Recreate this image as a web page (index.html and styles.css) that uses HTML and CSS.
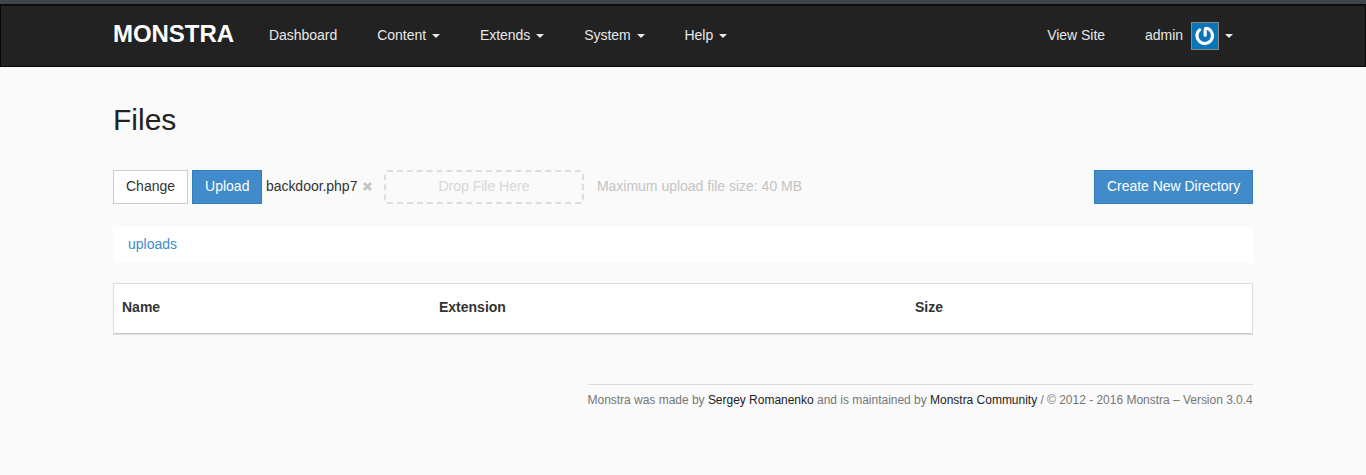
FILE: index.html
```html
<!DOCTYPE html>
<html lang="en">
<head>
<meta charset="utf-8">
<title>Monstra</title>
<link rel="stylesheet" href="styles.css">
</head>
<body>
<div class="chrome-edge"></div>
<header class="navbar">
  <div class="container nav-row">
    <a class="brand">MONSTRA</a>
    <nav class="nav">
      <a>Dashboard</a>
      <a>Content <i class="caret"></i></a>
      <a>Extends <i class="caret"></i></a>
      <a>System <i class="caret"></i></a>
      <a>Help <i class="caret"></i></a>
    </nav>
    <nav class="nav nav-right">
      <a>View Site</a>
      <a class="user"><span>admin</span>
        <svg class="avatar" width="28" height="28" viewBox="0 0 28 28"><rect x=".5" y=".5" width="27" height="27" fill="#0a74b8" stroke="#8a8a8a"/><path d="M8.6 7.9A7.8 7.8 0 1 0 18 7.2Q14.2 5.2 14.2 7.4V13.2" fill="none" stroke="#fff" stroke-width="3.2" stroke-linecap="round" stroke-linejoin="round"/></svg>
        <i class="caret"></i></a>
    </nav>
  </div>
</header>
<main class="container">
  <h2>Files</h2>
  <div class="toolbar">
    <span class="btn">Change</span>
    <span class="btn primary">Upload</span>
    <span class="filename">backdoor.php7</span>
    <svg class="close" width="9" height="9" viewBox="0 0 9 9"><path d="M1 1l7 7M8 1L1 8" stroke="#c4c4c4" stroke-width="2.7"/></svg>
    <span class="drop">Drop File Here</span>
    <span class="limit">Maximum upload file size: 40 MB</span>
    <span class="btn primary create">Create New Directory</span>
  </div>
  <div class="breadcrumb"><a>uploads</a></div>
  <table class="files">
    <thead><tr><th class="name">Name</th><th class="ext">Extension</th><th>Size</th></tr></thead>
  </table>
  <footer>Monstra was made by <a>Sergey Romanenko</a> and is maintained by <a>Monstra Community</a> / © 2012 - 2016 Monstra – Version 3.0.4</footer>
</main>
</body>
</html>
```
FILE: styles.css
```css
* { box-sizing: border-box; }
body { margin: 0; background: #fafafa; color: #333; font: 14px/20px "Liberation Sans", Arial, sans-serif; height: 475px; overflow: hidden; }
.chrome-edge { height: 4px; background: #40444d; }
.navbar { height: 63px; background: #222; border: 1px solid #080808; border-top: 2px solid #0a0c0e; }
.container { width: 1140px; margin: 0 auto; }
.nav-row { display: flex; height: 60px; align-items: center; }
.brand { font-size: 24px; font-weight: bold; color: #fff; width: 136px; padding-bottom: 4px; letter-spacing: -.05px; }
.nav { display: flex; align-items: center; letter-spacing: -.03px; }
.nav > a { color: #e8e8e8; padding: 0 20px 2px; }
.nav-right { margin-left: auto; }
.nav > .user { display: flex; align-items: center; padding-bottom: 0; }
.user span { padding-bottom: 2px; }
.avatar { margin: 0 6px 0 8px; }
.caret { display: inline-block; margin-left: 2px; vertical-align: middle; border-top: 4px solid; border-left: 4px solid transparent; border-right: 4px solid transparent; }
.user .caret { margin-left: 0; }
h2 { margin: 36px 0 34px; font-size: 30px; line-height: 33px; font-weight: normal; color: #222; }
.toolbar { display: flex; height: 34px; }
.btn { border: 1px solid #ccc; background: #fff; padding: 5px 12px; margin-right: 4px; }
.primary { background: #428bca; border-color: #357ebd; color: #fff; }
.filename { padding-top: 6px; width: 92px; margin-left: -.5px; letter-spacing: -.03px; }
.close { margin: 12px 12px 0 5px; }
.drop { width: 200px; border: 2px dashed #ddd; border-radius: 3px; color: #d8d8d8; text-align: center; padding-top: 4px; }
.limit { color: #c4c4c4; padding: 6px 0 0 13px; letter-spacing: -.01px; }
.create { width: 159px; margin: 0 0 0 auto; white-space: nowrap; letter-spacing: -.03px; }
.breadcrumb { margin-top: 23px; height: 36px; background: #fff; padding: 7px 15px; }
.breadcrumb a { color: #428bca; }
.files { width: 100%; height: 52px; margin-top: 20px; background: #fff; border: 1px solid #ddd; border-collapse: separate; border-spacing: 0; table-layout: fixed; }
.files th { text-align: left; padding: 0 8px 3px; border-bottom: 1px solid #ccc; }
.name { width: 317px; }
.ext { width: 476px; }
footer { width: 665px; margin: 49px 0 0 auto; border-top: 1px solid #ddd; padding-top: 5px; font-size: 12px; color: #777; white-space: nowrap; letter-spacing: -.017px; text-indent: -.5px; }
footer a { color: #222; }
```
